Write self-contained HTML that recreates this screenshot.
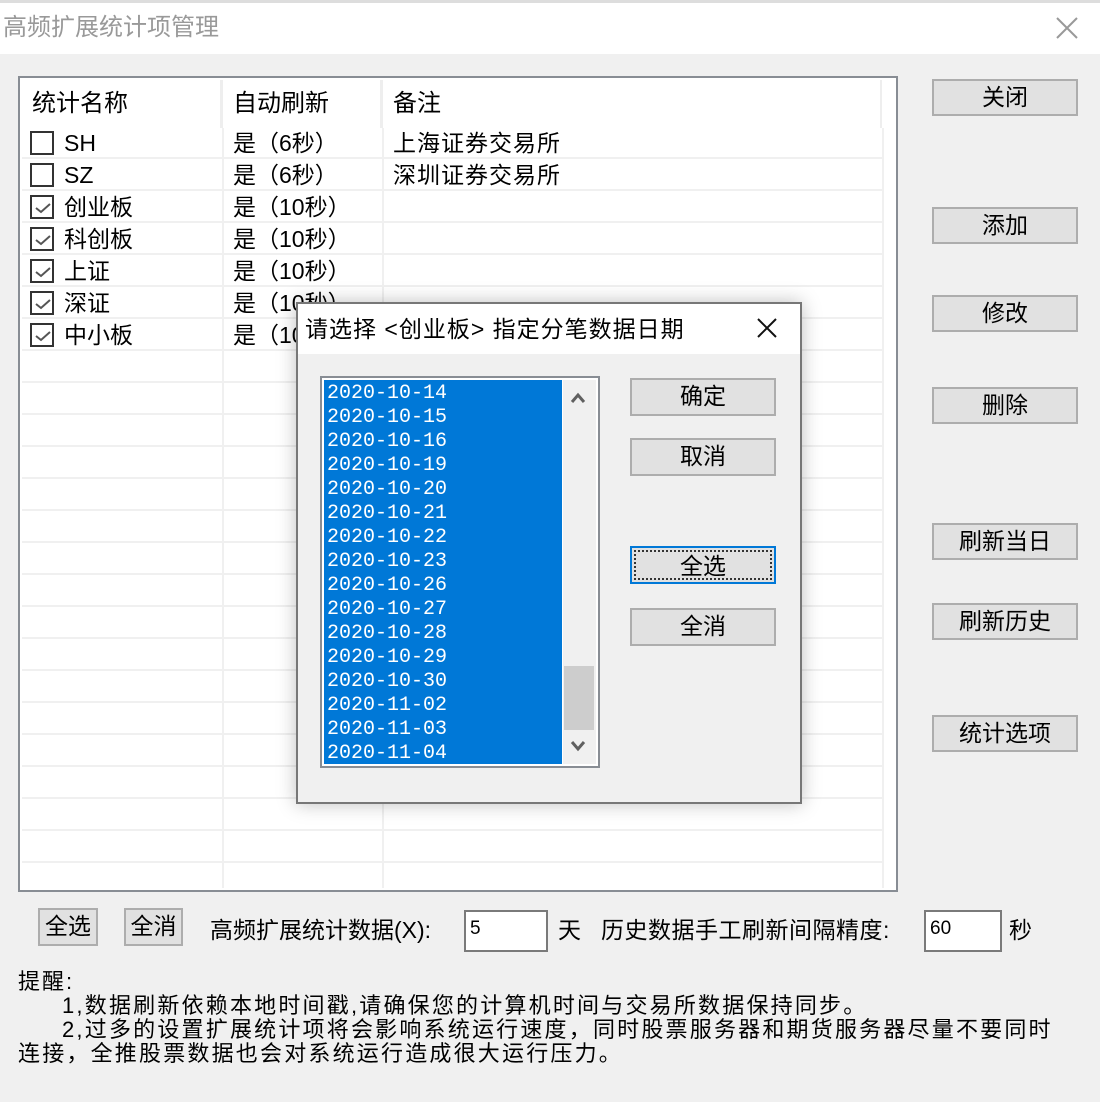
<!DOCTYPE html>
<html><head><meta charset="utf-8"><style>
*{box-sizing:border-box;margin:0;padding:0}
body{width:1100px;height:1102px;background:#f0f0f0;position:relative;overflow:hidden;font-family:"Liberation Sans","Noto Sans CJK SC",sans-serif;color:#000}
.a{position:absolute}
.btn{position:absolute;background:#e1e1e1;border:2px solid #adadad;font-size:23px;text-align:center;line-height:32px;white-space:nowrap}
.cb{position:absolute;left:30px;width:24px;height:24px;border:2px solid #333;background:#fff}
.cb svg{position:absolute;left:2px;top:3px}
.t{position:absolute;font-size:23px;white-space:nowrap;line-height:32px}
.hl{position:absolute;left:22px;width:862px;height:2px;background:#f0f0f0}
</style></head><body>
<div class="a" style="left:0;top:0;width:1100px;height:54px;background:#fff"></div>
<div class="a" style="left:0;top:0;width:1100px;height:3px;background:#ddd"></div>
<div class="t" style="left:3px;top:12px;color:#999;font-size:24px">高频扩展统计项管理</div>
<svg class="a" style="left:1056px;top:17px" width="22" height="22"><path d="M1 1L21 21M21 1L1 21" stroke="#999" stroke-width="2"/></svg>

<div class="a" style="left:18px;top:76px;width:880px;height:816px;background:#fff;border:2px solid #888d94"></div>
<div class="a" style="left:220px;top:80px;width:3px;height:48px;background:#eee"></div>
<div class="a" style="left:380px;top:80px;width:3px;height:48px;background:#eee"></div>
<div class="a" style="left:880px;top:80px;width:2px;height:48px;background:#eee"></div>
<div class="a" style="left:222px;top:128px;width:2px;height:760px;background:#f0f0f0"></div>
<div class="a" style="left:382px;top:128px;width:2px;height:760px;background:#f0f0f0"></div>
<div class="a" style="left:882px;top:128px;width:2px;height:760px;background:#f0f0f0"></div>
<div class="t" style="left:32px;top:88px;font-size:24px">统计名称</div>
<div class="t" style="left:233px;top:88px;font-size:24px">自动刷新</div>
<div class="t" style="left:393px;top:88px;font-size:24px">备注</div>

<div class="hl" style="top:157px"></div><div class="hl" style="top:189px"></div><div class="hl" style="top:221px"></div><div class="hl" style="top:253px"></div><div class="hl" style="top:285px"></div><div class="hl" style="top:317px"></div><div class="hl" style="top:349px"></div><div class="hl" style="top:381px"></div><div class="hl" style="top:413px"></div><div class="hl" style="top:445px"></div><div class="hl" style="top:477px"></div><div class="hl" style="top:509px"></div><div class="hl" style="top:541px"></div><div class="hl" style="top:573px"></div><div class="hl" style="top:605px"></div><div class="hl" style="top:637px"></div><div class="hl" style="top:669px"></div><div class="hl" style="top:701px"></div><div class="hl" style="top:733px"></div><div class="hl" style="top:765px"></div><div class="hl" style="top:797px"></div><div class="hl" style="top:829px"></div><div class="hl" style="top:861px"></div>

<div class="cb" style="top:131px"></div><div class="t" style="left:64px;top:127px">SH</div><div class="t" style="left:233px;top:127px">是（6秒）</div><div class="t" style="left:393px;top:127px;letter-spacing:1px">上海证券交易所</div>
<div class="cb" style="top:163px"></div><div class="t" style="left:64px;top:159px">SZ</div><div class="t" style="left:233px;top:159px">是（6秒）</div><div class="t" style="left:393px;top:159px;letter-spacing:1px">深圳证券交易所</div>
<div class="cb" style="top:195px"><svg width="18" height="16"><path d="M2 8L7 12L16 4" stroke="#555" stroke-width="2" fill="none"/></svg></div><div class="t" style="left:64px;top:191px">创业板</div><div class="t" style="left:233px;top:191px">是（10秒）</div>
<div class="cb" style="top:227px"><svg width="18" height="16"><path d="M2 8L7 12L16 4" stroke="#555" stroke-width="2" fill="none"/></svg></div><div class="t" style="left:64px;top:223px">科创板</div><div class="t" style="left:233px;top:223px">是（10秒）</div>
<div class="cb" style="top:259px"><svg width="18" height="16"><path d="M2 8L7 12L16 4" stroke="#555" stroke-width="2" fill="none"/></svg></div><div class="t" style="left:64px;top:255px">上证</div><div class="t" style="left:233px;top:255px">是（10秒）</div>
<div class="cb" style="top:291px"><svg width="18" height="16"><path d="M2 8L7 12L16 4" stroke="#555" stroke-width="2" fill="none"/></svg></div><div class="t" style="left:64px;top:287px">深证</div><div class="t" style="left:233px;top:287px">是（10秒）</div>
<div class="cb" style="top:323px"><svg width="18" height="16"><path d="M2 8L7 12L16 4" stroke="#555" stroke-width="2" fill="none"/></svg></div><div class="t" style="left:64px;top:319px">中小板</div><div class="t" style="left:233px;top:319px">是（10秒）</div>

<div class="btn" style="left:932px;top:79px;width:146px;height:37px">关闭</div>
<div class="btn" style="left:932px;top:207px;width:146px;height:37px">添加</div>
<div class="btn" style="left:932px;top:295px;width:146px;height:37px">修改</div>
<div class="btn" style="left:932px;top:387px;width:146px;height:37px">删除</div>
<div class="btn" style="left:932px;top:523px;width:146px;height:37px">刷新当日</div>
<div class="btn" style="left:932px;top:603px;width:146px;height:37px">刷新历史</div>
<div class="btn" style="left:932px;top:715px;width:146px;height:37px">统计选项</div>

<!-- dialog -->
<div class="a" style="left:296px;top:302px;width:506px;height:502px;background:#f0f0f0;border:2px solid #777;box-shadow:0 0 18px rgba(0,0,0,.25)"></div>
<div class="a" style="left:298px;top:304px;width:502px;height:50px;background:#fff"></div>
<div class="t" style="left:305px;top:313px;font-size:23px;letter-spacing:1px">请选择 &lt;创业板&gt; 指定分笔数据日期</div>
<svg class="a" style="left:757px;top:318px" width="20" height="20"><path d="M1 1L19 19M19 1L1 19" stroke="#111" stroke-width="2"/></svg>
<div class="a" style="left:320px;top:376px;width:280px;height:392px;background:#fff;border:2px solid #888d94"></div>
<div class="a" style="left:324px;top:380px;width:238px;height:384px;background:#0078d7"></div>
<div class="a" style="left:563px;top:380px;width:33px;height:384px;background:#f0f0f0"></div>
<div class="a" style="left:564px;top:666px;width:30px;height:64px;background:#cdcdcd"></div>
<svg class="a" style="left:570px;top:392px" width="16" height="12"><path d="M2 10L8 3L14 10" stroke="#606060" stroke-width="3" fill="none"/></svg>
<svg class="a" style="left:570px;top:740px" width="16" height="12"><path d="M2 2L8 9L14 2" stroke="#606060" stroke-width="3" fill="none"/></svg>
<div class="a" style="left:327px;top:382px;color:#fff;font-family:'Liberation Mono','DejaVu Sans Mono',monospace;font-size:20px;line-height:24px">2020-10-14<br>2020-10-15<br>2020-10-16<br>2020-10-19<br>2020-10-20<br>2020-10-21<br>2020-10-22<br>2020-10-23<br>2020-10-26<br>2020-10-27<br>2020-10-28<br>2020-10-29<br>2020-10-30<br>2020-11-02<br>2020-11-03<br>2020-11-04</div>
<div class="btn" style="left:630px;top:378px;width:146px;height:38px">确定</div>
<div class="btn" style="left:630px;top:438px;width:146px;height:38px">取消</div>
<div class="btn" style="left:630px;top:546px;width:146px;height:38px;border-color:#0078d7;"><div style="position:absolute;left:2px;top:2px;right:2px;bottom:2px;border:2px dotted #333;line-height:28px">全选</div></div>
<div class="btn" style="left:630px;top:608px;width:146px;height:38px">全消</div>

<!-- bottom -->
<div class="btn" style="left:38px;top:908px;width:60px;height:38px">全选</div>
<div class="btn" style="left:124px;top:908px;width:59px;height:38px">全消</div>
<div class="t" style="left:210px;top:914px;font-size:23px">高频扩展统计数据(X):</div>
<div class="a" style="left:464px;top:910px;width:84px;height:42px;background:#fff;border:2px solid #7a7a7a;font-size:19px;padding:6px 4px">5</div>
<div class="t" style="left:558px;top:914px">天</div>
<div class="t" style="left:601px;top:914px;letter-spacing:0.5px">历史数据手工刷新间隔精度:</div>
<div class="a" style="left:924px;top:910px;width:78px;height:42px;background:#fff;border:2px solid #7a7a7a;font-size:19px;padding:6px 4px">60</div>
<div class="t" style="left:1009px;top:914px">秒</div>
<div class="a" style="left:18px;top:970px;font-size:22px;line-height:24px;white-space:nowrap;letter-spacing:2px">提醒:</div>
<div class="a" style="left:62px;top:994px;font-size:22px;line-height:24px;white-space:nowrap;letter-spacing:2.2px">1,数据刷新依赖本地时间戳,请确保您的计算机时间与交易所数据保持同步。</div>
<div class="a" style="left:62px;top:1018px;font-size:22px;line-height:24px;white-space:nowrap;letter-spacing:2.2px">2,过多的设置扩展统计项将会影响系统运行速度，同时股票服务器和期货服务器尽量不要同时</div>
<div class="a" style="left:18px;top:1042px;font-size:22px;line-height:24px;white-space:nowrap;letter-spacing:2.2px">连接，全推股票数据也会对系统运行造成很大运行压力。</div>
</body></html>
